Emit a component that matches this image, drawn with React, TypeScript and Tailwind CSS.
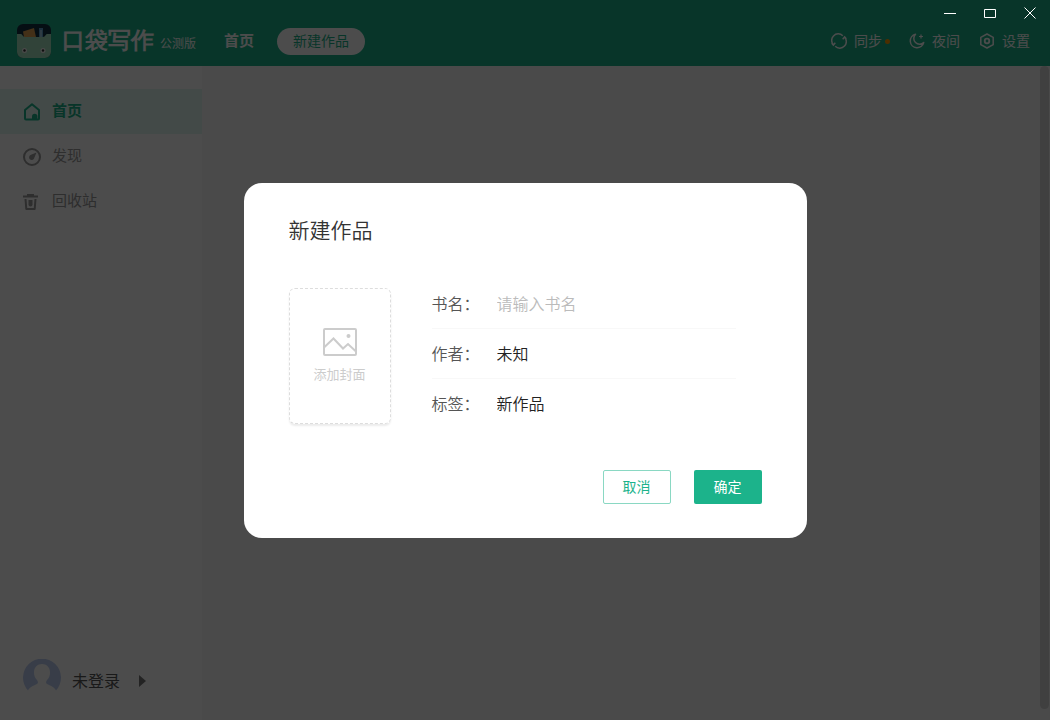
import React, { useState } from 'react';

const LogoIcon = () => (
  <svg width="34" height="34" viewBox="0 0 34 34" aria-hidden="true">
    <rect width="34" height="34" rx="6" fill="#123040" />
    <path d="M6 7.500 17 4l2 9H7z" fill="#e0a050" />
    <path d="M22 4h4v9h-4z" fill="#5f9fc8" />
    <path d="M23.500 6h1v7h-1z" fill="#d8ecf5" />
    <path
      d="M0 10h4c1.500 0 1.500 3 4 3h18c2.500 0 2.500-3 4-3h4v18a6 6 0 0 1-6 6H6a6 6 0 0 1-6-6z"
      fill="#a5e2be"
    />
    <circle cx="7.500" cy="26.500" r="2.500" fill="#f2f2f2" />
    <circle cx="7.500" cy="26.500" r="1.200" fill="#333" />
    <circle cx="26" cy="26.500" r="2.500" fill="#f2f2f2" />
    <circle cx="26" cy="26.500" r="1.200" fill="#333" />
  </svg>
);

const SyncIcon = () => (
  <svg width="16" height="16" viewBox="0 0 16 16" fill="none" stroke="currentColor" strokeWidth="1.500">
    <path d="M2.700 12.200A6.500 6.500 0 0 1 11.800 2.700M13.300 3.800A6.500 6.500 0 0 1 4.200 13.300" />
    <path d="M.8 10.200 2.400 12 4.300 9.800M15.200 5.800 13.600 4 11.700 6.200" />
  </svg>
);

const MoonIcon = () => (
  <svg width="16" height="16" viewBox="0 0 16 16" fill="none" stroke="currentColor" strokeWidth="1.500">
    <path d="M6.500 1.300A6.800 6.800 0 1 0 14.700 9.500 5.500 5.500 0 0 1 6.500 1.300z" strokeLinejoin="round" />
    <path d="M12 1.500v4M10 3.500h4" strokeWidth="1.200" />
  </svg>
);

const SettingIcon = () => (
  <svg width="16" height="16" viewBox="0 0 16 16" fill="none" stroke="currentColor" strokeWidth="1.500">
    <path d="M8 1 14.200 4.300v7.400L8 15 1.800 11.700V4.300z" strokeLinejoin="round" />
    <circle cx="8" cy="8" r="2.300" strokeWidth="1.800" />
  </svg>
);

const HomeIcon = () => (
  <svg width="18" height="18" viewBox="0 0 18 18" fill="none" aria-hidden="true">
    <path
      d="M2 7 9 1.300 16 7v8.500a1 1 0 0 1-1 1H3a1 1 0 0 1-1-1z"
      stroke="currentColor"
      strokeWidth="2"
      strokeLinejoin="round"
    />
    <path d="M9 17v-3.500a2.700 2.700 0 0 1 5.400 0V17z" fill="currentColor" />
  </svg>
);

const CompassIcon = () => (
  <svg width="18" height="18" viewBox="0 0 18 18" fill="none" aria-hidden="true">
    <circle cx="9" cy="9" r="8" stroke="currentColor" strokeWidth="2" />
    <path d="M13.500 4.500 11 10.500A2.600 2.600 0 1 1 7.500 7z" fill="currentColor" />
  </svg>
);

const TrashIcon = () => (
  <svg width="18" height="18" viewBox="0 0 18 18" fill="none" aria-hidden="true">
    <path d="M0 3.500h15M4 2h7" stroke="currentColor" strokeWidth="2" />
    <path d="M2.500 6 3.300 16h8.400l.8-10" stroke="currentColor" strokeWidth="2" strokeLinejoin="round" />
    <path d="M5.500 7h4v4.500a2 2 0 0 1-4 0z" fill="currentColor" />
  </svg>
);

const AvatarIcon = () => (
  <svg width="38" height="38" viewBox="0 0 38 38" aria-hidden="true">
    <path
      d="M5 31.500A19 19 0 1 1 33 31.500C31.500 28 27 26.500 24 25c-1.500-1-1-2.500 0-4 2-2 3-4 3-7.500C27 8 23.500 5 19 5s-8 3-8 8.500c0 3.500 1 5.500 3 7.500 1 1.500 1.500 3 0 4-3 1.500-7.500 3-9 6.500z"
      fill="#bccdf0"
    />
  </svg>
);

const PictureIcon = () => (
  <svg width="34" height="28" viewBox="0 0 34 28" fill="none" stroke="#ccc" strokeWidth="2" aria-hidden="true">
    <rect x="1" y="1" width="32" height="26" rx="1" />
    <path d="M1 19.500 10.500 10.500 20 20.500 25 16 33 23.500" />
    <circle cx="25.500" cy="8" r="2" fill="#ccc" stroke="none" />
  </svg>
);

const menus = [
  { name: '首页', icon: <HomeIcon />, className: 'bg-[#dff8f0] text-[#1cb38b] font-bold' },
  { name: '发现', icon: <CompassIcon />, className: 'text-[#999]' },
  { name: '回收站', icon: <TrashIcon />, className: 'text-[#999]' },
];

function WindowControls() {
  const btn = 'flex h-6 w-10 items-center justify-center';
  return (
    <div className="relative z-20 flex h-6 justify-end pt-px text-white">
      <button type="button" aria-label="最小化" className={btn}>
        <svg width="12" height="12" viewBox="0 0 12 12" stroke="currentColor">
          <path d="M0 6.500h12" />
        </svg>
      </button>
      <button type="button" aria-label="最大化" className={btn}>
        <svg width="12" height="12" viewBox="0 0 12 12" stroke="currentColor" fill="none">
          <path d="M.5 2.500h11v8H.5z" />
        </svg>
      </button>
      <button type="button" aria-label="关闭" className={btn}>
        <svg width="12" height="12" viewBox="0 0 12 12" stroke="currentColor">
          <path d="M.5.500l11 11M11.500.500l-11 11" />
        </svg>
      </button>
    </div>
  );
}

function Header() {
  return (
    <header className="bg-[#1cb38b] pb-2 text-white">
      <WindowControls />
      <div className="flex h-[34px] items-center pr-5 pl-[17px]">
        <LogoIcon />
        <h1 className="ml-[11px] font-serif text-[23px] leading-8 font-black">口袋写作</h1>
        <span className="mt-1 ml-1.5 text-xs">公测版</span>
        <a href="#home" className="ml-7 pb-0.5 text-[15px] font-bold">
          首页
        </a>
        <button
          type="button"
          className="ml-[23px] h-[27px] rounded-full bg-white px-4 pb-0.5 text-sm text-[#1cb38b]"
        >
          新建作品
        </button>
        <div className="ml-auto flex items-center gap-[19px] text-sm">
          <button type="button" className="flex items-center gap-[7px]">
            <SyncIcon />
            <span className="pb-0.5">同步</span>
            <span className="-ml-1 h-[5px] w-[5px] rounded-full bg-[#ff9c00]" />
          </button>
          <button type="button" className="flex items-center gap-[7px]">
            <MoonIcon />
            <span className="pb-0.5">夜间</span>
          </button>
          <button type="button" className="flex items-center gap-[7px]">
            <SettingIcon />
            <span className="pb-0.5">设置</span>
          </button>
        </div>
      </div>
    </header>
  );
}

function Sidebar() {
  return (
    <aside className="flex w-[202px] shrink-0 flex-col bg-white pt-[23px] pb-[23px]">
      <nav>
        {menus.map((menu) => (
          <a
            key={menu.name}
            href="#menu"
            className={`flex h-[45px] items-center gap-[11px] pl-[23px] text-[15px] ${menu.className}`}
          >
            {menu.icon}
            <span className="pb-0.5">{menu.name}</span>
          </a>
        ))}
      </nav>
      <button type="button" className="mt-auto flex items-center pl-[23px] text-base text-[#555]">
        <AvatarIcon />
        <span className="mt-1 ml-[11px]">未登录</span>
        <svg width="7" height="12" viewBox="0 0 7 12" className="mt-1.5 ml-[19px]" fill="#777">
          <path d="M0 0 7 6 0 12z" />
        </svg>
      </button>
    </aside>
  );
}

function CreateDialog() {
  const [title, setTitle] = useState('');
  const [author, setAuthor] = useState('未知');
  const [tag, setTag] = useState('新作品');

  const fields = [
    { id: 'title', label: '书名：', value: title, onChange: setTitle, placeholder: '请输入书名' },
    { id: 'author', label: '作者：', value: author, onChange: setAuthor, placeholder: '' },
    { id: 'tag', label: '标签：', value: tag, onChange: setTag, placeholder: '' },
  ];

  return (
    <div className="fixed inset-0 z-10 flex items-center justify-center bg-black/70">
      <form
        role="dialog"
        aria-labelledby="dialog-title"
        className="w-[563px] rounded-[18px] bg-white px-[45px] pt-[30px] pb-[34px]"
      >
        <h2 id="dialog-title" className="text-[21px] leading-8 font-[350] text-[#333]">
          新建作品
        </h2>
        <div className="mt-[34px] flex items-start">
          <button
            type="button"
            className="mt-[9px] flex h-[136px] w-[102px] flex-col items-center justify-center gap-2 rounded-md border border-dashed border-[#ddd] text-[13px] leading-5 text-[#ccc] shadow-[0_2px_2px_rgba(0,0,0,0.08)]"
          >
            <PictureIcon />
            添加封面
          </button>
          <div className="ml-[41px] w-[304px] divide-y divide-[#f8f8f8]">
            {fields.map((field) => (
              <div key={field.id} className="flex h-[50px] items-center pb-px">
                <label htmlFor={field.id} className="w-[65px] text-base font-[350] text-[#555]">
                  {field.label}
                </label>
                <input
                  id={field.id}
                  type="text"
                  value={field.value}
                  placeholder={field.placeholder}
                  onChange={(e) => field.onChange(e.target.value)}
                  className="min-w-0 flex-1 bg-transparent text-base font-[350] text-[#222] outline-none placeholder:text-[#bbb]"
                />
              </div>
            ))}
          </div>
        </div>
        <div className="mt-[41px] flex justify-end gap-[23px] text-sm">
          <button type="button" className="h-[34px] w-[68px] rounded-xs border border-[#8ad8c3] pb-0.5 text-[#1cb38b]">
            取消
          </button>
          <button type="button" className="h-[34px] w-[68px] rounded-xs bg-[#1cb38b] pb-0.5 text-white">
            确定
          </button>
        </div>
      </form>
    </div>
  );
}

export default function App() {
  return (
    <div className="flex min-h-screen flex-col bg-[#f7f7f7] font-['Noto_Sans_CJK_SC',sans-serif]">
      <Header />
      <div className="flex flex-1">
        <Sidebar />
        <main className="flex flex-1 justify-end pr-px pb-[11px]">
          <div className="w-[9px] rounded-full bg-[#d5d5d5]" />
        </main>
      </div>
      <CreateDialog />
    </div>
  );
}
